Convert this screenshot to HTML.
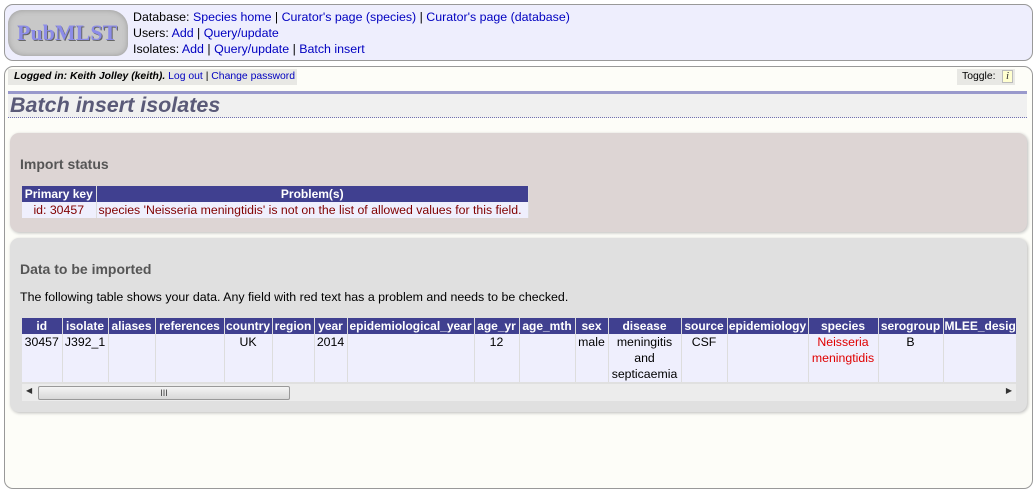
<!DOCTYPE html>
<html><head><meta charset="utf-8"><style>
*{margin:0;padding:0;box-sizing:border-box}
body{width:1036px;height:503px;background:#fff;font-family:"Liberation Sans",Arial,sans-serif;font-size:12.3px;color:#000;position:relative;overflow:hidden}
a{color:#0000c0;text-decoration:none}
.abs{position:absolute}
#hdr{left:4px;top:4px;width:1029px;height:57px;background:#eeeefd;border:1px solid #999;border-radius:9px}
#logo{left:8px;top:10px;width:120px;height:46px;background:#c8c8c8;border-radius:14px 18px 12px 16px;box-shadow:inset 0 0 6px #999;overflow:hidden}
#logo span{position:absolute;left:9px;top:10px;font-family:"Liberation Serif",serif;font-weight:bold;font-size:22px;color:#8c8ce8;text-shadow:1px 1px 0 #666}
#nav{left:133px;top:9px;font-size:12.4px;line-height:16px}
#main{left:4px;top:66px;width:1029px;height:423px;background:#fdfdf8;border:1px solid #999;border-radius:9px}
#login{left:8px;top:69px;width:289px;height:16px;background:#e8e8e4;font-size:10.4px;padding:2px 0 0 6px}
#toggle{left:957px;top:69px;width:58px;height:16px;background:#e8e8e4;font-size:10.4px;padding:2px 0 0 5px}
#toggle b{position:absolute;left:45px;top:1px;width:11px;height:13px;background:#ffffd0;border:1px solid #bbb;font-family:"Liberation Serif",serif;font-style:italic;font-size:11px;text-align:center;line-height:11px;color:#333;font-weight:normal}
#bar{left:8px;top:91px;width:1019px;height:3px;background:#9999cc}
#title{left:8px;top:94px;width:1019px;height:24px;background:#f0f0f0;border-bottom:1px dotted #7070b0;font-size:21.5px;font-weight:bold;font-style:italic;color:#5a5a78;padding-left:2px;line-height:23px}
.box{border-radius:9px;box-shadow:1px 1px 3px #bbb}
#imp{left:10px;top:133px;width:1017px;height:99px;background:#ddd5d4}
#dat{left:10px;top:238px;width:1017px;height:174px;background:#e0e0e0}
h2{position:absolute;font-size:14px;font-weight:bold;color:#555}
table{border-collapse:collapse;position:absolute}
th{background:#404090;color:#fff;font-weight:bold;font-size:12px;height:16px;border-right:1px solid #ddd;padding:0 1px;white-space:nowrap;line-height:15px;overflow:hidden}
td{background:#efeffd;font-size:12.3px;border-right:1px solid #ddd;padding:0 2px;vertical-align:top;text-align:center;line-height:16px}
#t1 td{color:#800000}
#sb{left:22px;top:384px;width:994px;height:17px;background:#ececec}
#thumb{left:38px;top:386px;width:252px;height:14px;border:1px solid #999;border-radius:2px;background:linear-gradient(#f4f4f4,#d8d8d8);text-align:center;font-size:9px;line-height:12px;color:#444}
</style></head><body>
<div id="hdr" class="abs"></div>
<div id="logo" class="abs"><span>PubMLST</span></div>
<div id="nav" class="abs">Database: <a>Species home</a> | <a>Curator's page (species)</a> | <a>Curator's page (database)</a><br>Users: <a>Add</a> | <a>Query/update</a><br>Isolates: <a>Add</a> | <a>Query/update</a> | <a>Batch insert</a></div>
<div id="main" class="abs"></div>
<div id="login" class="abs"><i><b>Logged in: Keith Jolley (keith).</b></i> <a>Log out</a> | <a>Change password</a></div>
<div id="toggle" class="abs">Toggle: <b>i</b></div>
<div id="bar" class="abs"></div>
<div id="title" class="abs">Batch insert isolates</div>
<div id="imp" class="abs box"></div>
<h2 style="left:20px;top:156px">Import status</h2>
<table id="t1" style="left:22px;top:186px;width:507px">
<tr><th style="width:74px">Primary key</th><th>Problem(s)</th></tr>
<tr><td>id: 30457</td><td style="text-align:left">species 'Neisseria meningtidis' is not on the list of allowed values for this field.</td></tr>
</table>
<div id="dat" class="abs box"></div>
<h2 style="left:20px;top:261px">Data to be imported</h2>
<div class="abs" style="left:20px;top:290px;font-size:12.4px">The following table shows your data. Any field with red text has a problem and needs to be checked.</div>
<div class="abs" style="left:22px;top:318px;width:994px;height:66px;overflow:hidden">
<table style="left:0;top:0;width:1040px;table-layout:fixed">
<colgroup><col style="width:40px"><col style="width:46px"><col style="width:47px"><col style="width:69px"><col style="width:48px"><col style="width:42px"><col style="width:33px"><col style="width:127px"><col style="width:45px"><col style="width:56px"><col style="width:33px"><col style="width:73px"><col style="width:46px"><col style="width:81px"><col style="width:70px"><col style="width:65px"><col style="width:119px"></colgroup>
<tr><th>id</th><th>isolate</th><th>aliases</th><th>references</th><th>country</th><th>region</th><th>year</th><th>epidemiological_year</th><th>age_yr</th><th>age_mth</th><th>sex</th><th>disease</th><th>source</th><th>epidemiology</th><th>species</th><th>serogroup</th><th style="text-align:left">MLEE_designation</th></tr>
<tr style="height:48px"><td>30457</td><td>J392_1</td><td></td><td></td><td>UK</td><td></td><td>2014</td><td></td><td>12</td><td></td><td>male</td><td>meningitis and septicaemia</td><td>CSF</td><td></td><td style="color:#e00000">Neisseria meningtidis</td><td>B</td><td></td></tr>
</table></div>
<div id="sb" class="abs"><span style="position:absolute;left:4px;top:2px;font-size:8px;color:#333">◀</span><span style="position:absolute;right:4px;top:2px;font-size:8px;color:#333">▶</span></div>
<div id="thumb" class="abs">III</div>
</body></html>
